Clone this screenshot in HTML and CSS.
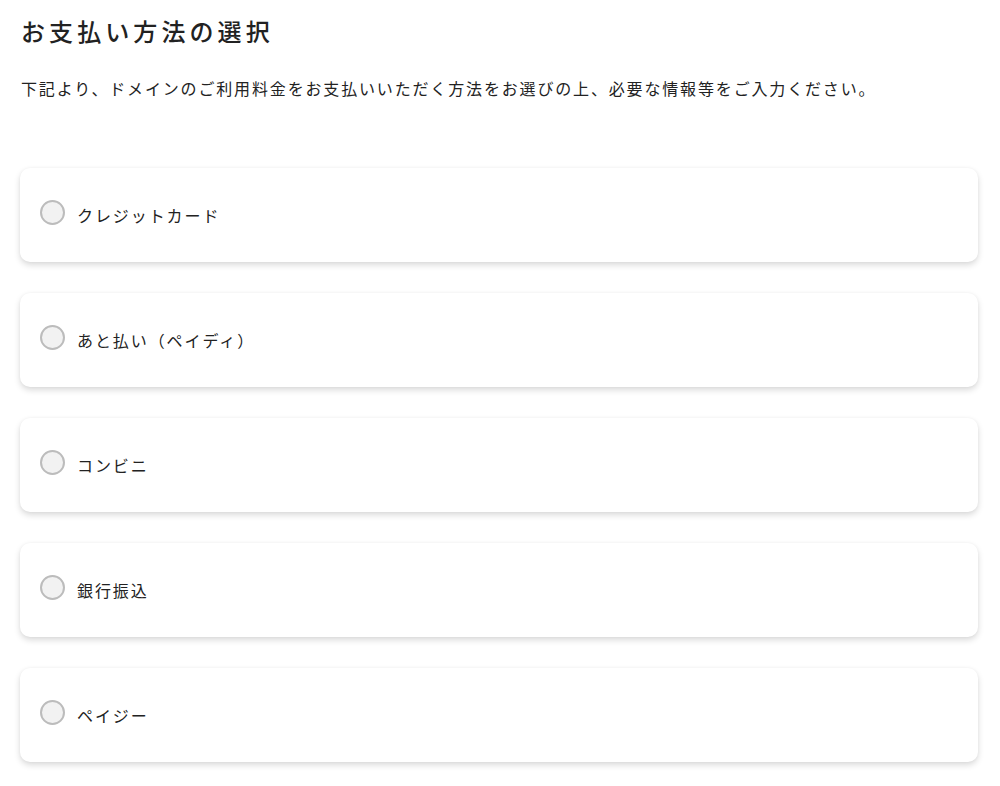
FILE: index.html
```html
<!DOCTYPE html>
<html lang="ja">
<head>
<meta charset="utf-8">
<title>お支払い方法の選択</title>
<link rel="stylesheet" href="styles.css">
</head>
<body>
<main class="page">
  <h1 class="title">お支払い方法の選択</h1>
  <p class="lead">下記より、ドメインのご利用料金をお支払いいただく方法をお選びの上、必要な情報等をご入力ください。</p>
  <ul class="methods">
    <li class="card"><span class="radio"></span><span class="label">クレジットカード</span></li>
    <li class="card"><span class="radio"></span><span class="label">あと払い（ペイディ）</span></li>
    <li class="card"><span class="radio"></span><span class="label">コンビニ</span></li>
    <li class="card"><span class="radio"></span><span class="label">銀行振込</span></li>
    <li class="card"><span class="radio"></span><span class="label">ペイジー</span></li>
  </ul>
</main>
</body>
</html>
```

FILE: styles.css
```css
html, body {
  margin: 0;
  padding: 0;
  background: #ffffff;
}
body {
  font-family: "Noto Sans CJK JP", "Noto Sans", sans-serif;
  color: #222222;
}
.page {
  padding: 13px 22px 24px 20px;
}
.title {
  margin: 0 0 0 1px;
  font-size: 24px;
  line-height: 36px;
  font-weight: 500;
  letter-spacing: 0.17em;
}
.lead {
  margin: 25px 0 0 1px;
  font-size: 16px;
  line-height: 28px;
  letter-spacing: 0.115em;
}
.methods {
  list-style: none;
  margin: 66px 0 0 0;
  padding: 0;
  display: flex;
  flex-direction: column;
  gap: 31px;
}
.card {
  height: 94px;
  box-sizing: border-box;
  background: #ffffff;
  border-radius: 10px;
  box-shadow: 0 3px 6px rgba(0, 0, 0, 0.15), 0 0 3px rgba(0, 0, 0, 0.04);
  display: flex;
  align-items: center;
  padding: 0 20px 0 20px;
}
.radio {
  width: 25px;
  height: 25px;
  box-sizing: border-box;
  border: 2px solid #bcbcbc;
  border-radius: 50%;
  background: #f2f2f2;
  flex: none;
  margin-top: -6px;
}
.label {
  margin-left: 12px;
  font-size: 16px;
  line-height: 24px;
  letter-spacing: 0.12em;
}
```
